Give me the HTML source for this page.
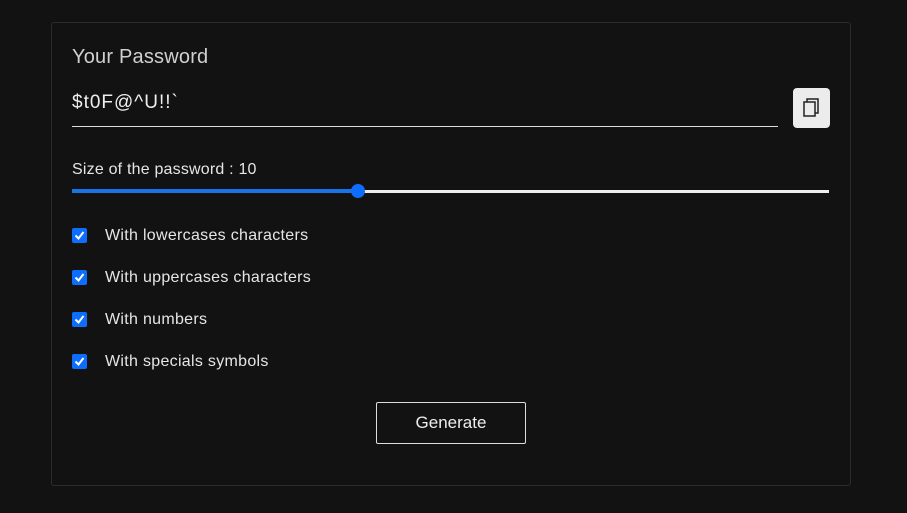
<!DOCTYPE html>
<html><head><style>
body{margin:0;background:#121212;width:907px;height:513px;overflow:hidden;font-family:"Liberation Sans",sans-serif;color:#e6e6e6;position:relative}
.card{position:absolute;left:51px;top:22px;width:800px;height:464px;border:1px solid #2b2b2b;border-radius:3px;box-sizing:border-box}
.t{position:absolute;white-space:nowrap}
.l{left:105px;font-size:16px;letter-spacing:0.3px}
.cb{position:absolute;left:72px;width:15px;height:15px;background:#0d6efd;border-radius:2px}
.cb svg{position:absolute;left:2px;top:2px}
</style></head><body>
<div class="card"></div>
<div class="t" style="left:72px;top:46px;font-size:20px;color:#d0d0d0;letter-spacing:0.2px">Your Password</div>
<div class="t" style="left:72px;top:92px;font-size:19px;color:#eee;letter-spacing:1px">$t0F@^U!!`</div>
<div style="position:absolute;left:72px;top:126px;width:706px;height:1px;background:#ddd"></div>
<div style="position:absolute;left:793px;top:88px;width:37px;height:40px;background:#ececec;border-radius:4px">
<svg width="37" height="40" viewBox="0 0 37 40"><rect x="11" y="14" width="11" height="14" fill="none" stroke="#222" stroke-width="1.5"/><path d="M14 14V11H25V25H22" fill="none" stroke="#222" stroke-width="1.5"/></svg></div>
<div class="t" style="left:72px;top:161px;font-size:16px;letter-spacing:0.2px">Size of the password : 10</div>
<div style="position:absolute;left:72px;top:189px;width:286px;height:4px;background:#1a73e8"></div>
<div style="position:absolute;left:358px;top:190px;width:471px;height:3px;background:#eee"></div>
<div style="position:absolute;left:351px;top:184px;width:14px;height:14px;border-radius:50%;background:#0d6efd"></div>
<div class="cb" style="top:228px"><svg width="11" height="11" viewBox="0 0 11 11"><path d="M1.5 5.5L4.5 8.5L9.5 2" fill="none" stroke="#fff" stroke-width="2"/></svg></div>
<div class="t l" style="top:227px">With lowercases characters</div>
<div class="cb" style="top:270px"><svg width="11" height="11" viewBox="0 0 11 11"><path d="M1.5 5.5L4.5 8.5L9.5 2" fill="none" stroke="#fff" stroke-width="2"/></svg></div>
<div class="t l" style="top:269px">With uppercases characters</div>
<div class="cb" style="top:312px"><svg width="11" height="11" viewBox="0 0 11 11"><path d="M1.5 5.5L4.5 8.5L9.5 2" fill="none" stroke="#fff" stroke-width="2"/></svg></div>
<div class="t l" style="top:311px">With numbers</div>
<div class="cb" style="top:354px"><svg width="11" height="11" viewBox="0 0 11 11"><path d="M1.5 5.5L4.5 8.5L9.5 2" fill="none" stroke="#fff" stroke-width="2"/></svg></div>
<div class="t l" style="top:353px">With specials symbols</div>
<div style="position:absolute;left:376px;top:402px;width:150px;height:42px;border:1px solid #ddd;box-sizing:border-box;border-radius:2px;text-align:center;line-height:40px;font-size:17px;color:#eee">Generate</div>
</body></html>
